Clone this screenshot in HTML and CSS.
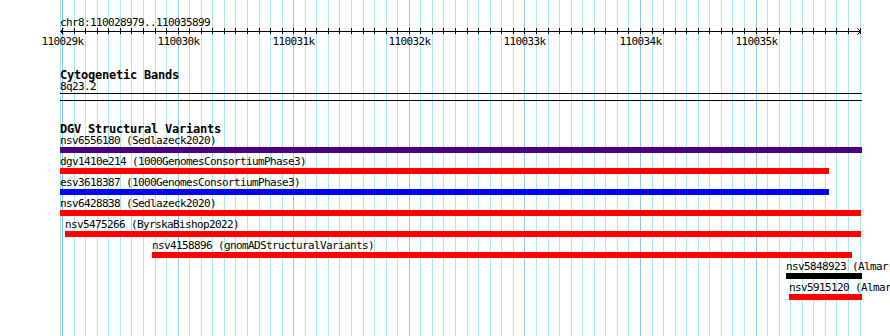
FILE: index.html
```html
<!DOCTYPE html>
<html lang="en">
<head>
    <meta charset="UTF-8">
    <meta name="viewport" content="width=device-width, initial-scale=1.0">
    <title>chr8:110028979-110035899</title>
    <link rel="stylesheet" href="styles.css">
</head>
<body>
    <div class="browser">
        <!-- guidelines, filled in by the script below -->
        <svg class="grid" id="grid" width="890" height="336"></svg>

        <div class="tracks">
            <div class="position">chr8:110028979..110035899</div>
            <svg class="ruler" id="ruler" width="890" height="20">
                <rect class="axis" x="60" y="3" width="801" height="1"></rect>
                <polyline class="arrow" points="63.5,0.5 60.5,3.5 63.5,6.5"></polyline>
                <polyline class="arrow" points="857.5,0.5 860.5,3.5 857.5,6.5"></polyline>
            </svg>

            <div class="track cyto">
                <div class="track-title">Cytogenetic Bands</div>
                <div class="band-name">8q23.2</div>
                <div class="band"></div>
            </div>

            <div class="track dgv">
                <div class="track-title">DGV Structural Variants</div>

                <div class="feature">
                    <div class="feature-label">nsv6556180 (Sedlazeck2020)</div>
                    <div class="feature-bar indigo" style="width: 802px;"></div>
                </div>
                <div class="feature">
                    <div class="feature-label">dgv1410e214 (1000GenomesConsortiumPhase3)</div>
                    <div class="feature-bar red" style="width: 769px;"></div>
                </div>
                <div class="feature">
                    <div class="feature-label">esv3618387 (1000GenomesConsortiumPhase3)</div>
                    <div class="feature-bar blue" style="width: 769px;"></div>
                </div>
                <div class="feature">
                    <div class="feature-label">nsv6428838 (Sedlazeck2020)</div>
                    <div class="feature-bar red" style="width: 801px;"></div>
                </div>
                <div class="feature" style="margin-left: 5px;">
                    <div class="feature-label">nsv5475266 (ByrskaBishop2022)</div>
                    <div class="feature-bar red" style="width: 796px;"></div>
                </div>
                <div class="feature" style="margin-left: 92px;">
                    <div class="feature-label">nsv4158896 (gnomADStructuralVariants)</div>
                    <div class="feature-bar red" style="width: 700px;"></div>
                </div>
                <div class="feature" style="margin-left: 726px;">
                    <div class="feature-label">nsv5848923 (Almarri2020)</div>
                    <div class="feature-bar black" style="width: 76px;"></div>
                </div>
                <div class="feature" style="margin-left: 729px;">
                    <div class="feature-label">nsv5915120 (Almarri2020)</div>
                    <div class="feature-bar red" style="width: 73px;"></div>
                </div>
            </div>
        </div>
    </div>

    <script>
        var winStart = 110028978;
        var winEnd = 110035899;
        var dataLeft = 60;
        var dataWidth = 800;
        var svgNS = 'http://www.w3.org/2000/svg';

        function bpToX(bp) {
            return Math.floor(dataLeft + (bp - winStart) * dataWidth / (winEnd - winStart));
        }

        function addRect(svg, x, y, w, h, cls) {
            var r = document.createElementNS(svgNS, 'rect');
            r.setAttribute('x', x);
            r.setAttribute('y', y);
            r.setAttribute('width', w);
            r.setAttribute('height', h);
            r.setAttribute('class', cls);
            svg.appendChild(r);
        }

        var grid = document.getElementById('grid');
        var ruler = document.getElementById('ruler');

        // left edge of the data area
        addRect(grid, dataLeft, 0, 1, 336, 'minor');

        for (var bp = 110029000; bp <= 110035900; bp += 100) {
            var x = bpToX(bp);
            var major = bp % 1000 === 0;
            addRect(grid, x, 0, 1, 336, major ? 'major' : 'minor');
            addRect(ruler, x, 0, 1, 6, 'tick');

            if (major) {
                var t = document.createElementNS(svgNS, 'text');
                t.setAttribute('x', x + 0.5);
                t.setAttribute('y', 17);
                t.setAttribute('class', 'tick-label');
                t.textContent = (bp / 1000) + 'k';
                ruler.appendChild(t);
            }
        }
    </script>
</body>
</html>
```

FILE: styles.css
```css
body {
    margin: 0;
    background: #fff;
}

/* Whole browser image */
.browser {
    position: relative;
    width: 890px;
    height: 336px;
    overflow: hidden;
    font-family: "DejaVu Sans Mono", "Liberation Mono", monospace;
    font-size: 11px;
    line-height: 11px;
    letter-spacing: -0.62px;
    color: #000;
}

/* Guidelines sit behind everything */
.grid {
    position: absolute;
    top: 0;
    left: 0;
}

.grid .minor {
    fill: #aae8f0;
}

.grid .major {
    fill: #8cc6ec;
}

.tracks {
    position: relative;
}

/* Base position ruler */
.position {
    padding: 17px 0 0 60px;
    white-space: nowrap;
}

.ruler {
    display: block;
}

.ruler .axis,
.ruler .tick {
    fill: #000;
}

.ruler .arrow {
    fill: none;
    stroke: #000;
    stroke-width: 1;
}

.tick-label {
    font-family: "DejaVu Sans Mono", "Liberation Mono", monospace;
    font-size: 11px;
    letter-spacing: -0.62px;
    text-anchor: middle;
    fill: #000;
}

/* Tracks */
.track {
    padding-left: 60px;
}

.track-title {
    font-weight: bold;
    font-size: 12px;
    line-height: 12px;
    letter-spacing: -0.22px;
    white-space: nowrap;
}

.cyto {
    margin-top: 21px;
}

.band {
    width: 802px;
    height: 6px;
    margin-top: 1px;
    border-top: 1px solid #000;
    border-bottom: 1px solid #000;
}

.dgv {
    margin-top: 22px;
}

.feature-label {
    white-space: nowrap;
}

.feature-bar {
    height: 6px;
    margin: 1px 0 3px;
}

.indigo {
    background: #4b0082;
}

.red {
    background: #ff0000;
}

.blue {
    background: #0000ff;
}

.black {
    background: #000;
}
```
